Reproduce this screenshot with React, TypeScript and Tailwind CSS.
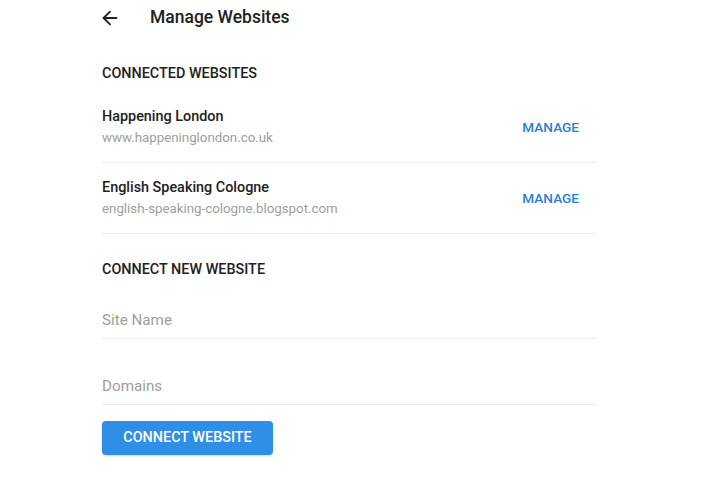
import { ArrowLeft } from "lucide-react";

const sites = [
  { name: "Happening London", url: "www.happeninglondon.co.uk" },
  { name: "English Speaking Cologne", url: "english-speaking-cologne.blogspot.com" },
];

export default function App() {
  return (
    <div className="min-h-[483px] w-[720px] bg-white font-['Roboto',sans-serif] text-[#212121]">
      <div className="ml-[102px] w-[494px]">
        {/* header */}
        <div className="flex h-[35px] items-center">
          <ArrowLeft className="h-[22px] w-[22px] -ml-[3px] text-[#222]" strokeWidth={2} />
          <h1 className="ml-[29px] text-[17.5px] font-medium">Manage Websites</h1>
        </div>

        <h2 className="mt-[30px] text-[14.4px] font-medium leading-[18px]">CONNECTED WEBSITES</h2>

        <ul className="mt-[9px]">
          {sites.map((s) => (
            <li key={s.name} className="flex h-[71px] items-center border-b border-[#ececec]">
              <div className="min-w-0 flex-1">
                <p className="text-[14.4px] font-medium leading-[20px]">{s.name}</p>
                <p className="mt-[2px] text-[13.3px] leading-[18px] text-[#9e9e9e]">{s.url}</p>
              </div>
              <button className="mr-[17px] text-[13.6px] font-medium text-[#2a7fd0]">MANAGE</button>
            </li>
          ))}
        </ul>

        <h2 className="mt-[27px] text-[14.4px] font-medium leading-[18px]">CONNECT NEW WEBSITE</h2>

        <div className="mt-[29px] border-b border-[#ececec] pb-[6px]">
          <input
            placeholder="Site Name"
            className="w-full text-[15.2px] leading-[24px] outline-none placeholder:text-[#9e9e9e]"
          />
        </div>
        <div className="mt-[35px] border-b border-[#ececec] pb-[6px]">
          <input
            placeholder="Domains"
            className="w-full text-[15.2px] leading-[24px] outline-none placeholder:text-[#9e9e9e]"
          />
        </div>

        <button className="mt-[16px] h-[34px] w-[171px] rounded-[4px] bg-[#2f8fe6] text-[14.4px] font-medium text-white shadow-[0_1px_2px_rgba(0,0,0,0.15)]">
          CONNECT WEBSITE
        </button>
      </div>
    </div>
  );
}
